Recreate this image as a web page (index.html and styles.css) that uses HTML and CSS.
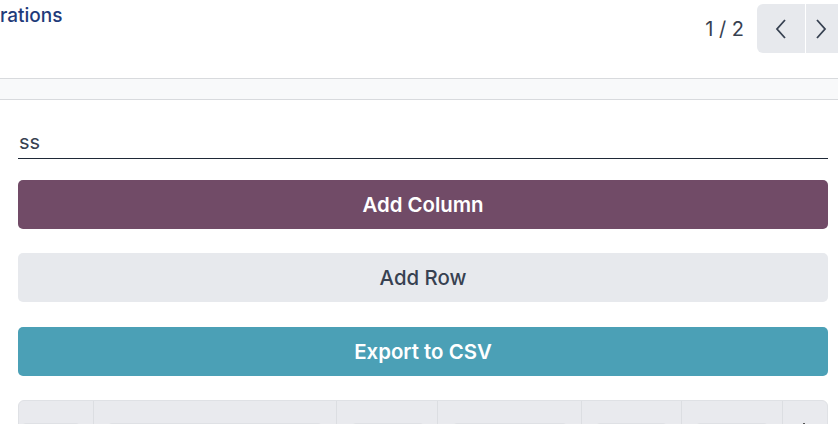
FILE: index.html
```html
<!DOCTYPE html>
<html>
<head>
<meta charset="utf-8">
<link rel="stylesheet" href="styles.css">
</head>
<body>
<div class="header">
  <div class="crumb">rations</div>
  <div class="pager">
    <span class="pager-value">1 / 2</span>
    <div class="pager-btns">
      <button class="pbtn pbtn-l"><svg width="16" height="24" viewBox="0 0 16 24"><path d="M12 3 L4 12 L12 21" fill="none" stroke="#374151" stroke-width="1.8"/></svg></button>
      <button class="pbtn pbtn-r"><svg width="16" height="24" viewBox="0 0 16 24"><path d="M4 3 L12 12 L4 21" fill="none" stroke="#374151" stroke-width="1.8"/></svg></button>
    </div>
  </div>
</div>
<div class="band"></div>
<div class="content">
  <div class="field">ss</div>
  <button class="btn btn-primary">Add Column</button>
  <button class="btn btn-light">Add Row</button>
  <button class="btn btn-info">Export to CSV</button>
  <div class="table">
    <div class="col c1"><div class="cell"></div></div>
    <div class="col c2"><div class="cell"></div></div>
    <div class="col c3"><div class="cell"></div></div>
    <div class="col c4"><div class="cell"></div></div>
    <div class="col c5"><div class="cell"></div></div>
    <div class="col c6"><div class="cell"></div></div>
    <div class="col c7"><span class="dot"></span></div>
  </div>
</div>
</body>
</html>
```
FILE: styles.css
```css
* { box-sizing: border-box; }
html, body { margin: 0; padding: 0; }
body {
  font-family: Inter, "Noto Sans", sans-serif;
  background: #fff;
  width: 838px;
  height: 424px;
  overflow: hidden;
  color: #374151;
}
.header {
  height: 79px;
  border-bottom: 1px solid #d8dadd;
  display: flex;
  justify-content: space-between;
  align-items: flex-start;
}
.crumb {
  margin-top: 4px;
  font-size: 19px;
  font-weight: 500;
  color: #1f3b7a;
  line-height: 24px;
}
.pager {
  display: flex;
  align-items: center;
  margin-top: 4px;
}
.pager-value {
  font-size: 20px;
  color: #374151;
  margin-right: 13px;
}
.pager-btns { display: flex; }
.pbtn {
  width: 48px;
  height: 49px;
  background: #e7e9ed;
  border: none;
  padding: 0;
  display: flex;
  align-items: center;
  justify-content: center;
}
.pbtn-l { border-radius: 6px 0 0 6px; margin-right: 1px; }
.pbtn-r { width: 32px; justify-content: flex-start; padding-left: 7px; }
.band {
  height: 21px;
  background: #f8f9fa;
  border-bottom: 1px solid #d8dadd;
}
.content {
  padding: 0 10px 0 18px;
  display: flex;
  flex-direction: column;
}
.field {
  margin-top: 29px;
  height: 30px;
  border-bottom: 1.5px solid #1f2937;
  font-size: 20px;
  line-height: 26px;
  color: #374151;
  padding-left: 1px;
}
.btn {
  height: 49px;
  border: none;
  border-radius: 5px;
  font-family: Inter, "Noto Sans", sans-serif;
  font-size: 20.4px;
  width: 100%;
}
.btn-primary {
  margin-top: 21px;
  background: #714b67;
  color: #fff;
  font-weight: 600;
}
.btn-light {
  margin-top: 24px;
  background: #e7e9ed;
  color: #374151;
  font-weight: 500;
}
.btn-info {
  margin-top: 25px;
  background: #4ba0b6;
  color: #fff;
  font-weight: 600;
}
.table {
  margin-top: 24px;
  height: 60px;
  background: #e9eaee;
  border: 1px solid #dfe1e5;
  border-radius: 6px 6px 0 0;
  display: flex;
}
.col {
  border-right: 1px solid #dcdee2;
  padding-top: 22px;
}
.col:last-child { border-right: none; }
.c1 { width: 75px; padding-left: 2px; }
.c2 { width: 243px; padding-left: 13px; }
.c3 { width: 101px; padding-left: 14px; }
.c4 { width: 144px; padding-left: 14px; }
.c5 { width: 100px; padding-left: 13px; }
.c6 { width: 101px; padding-left: 13px; }
.c7 { flex: 1; position: relative; }
.cell {
  height: 30px;
  border: 1px solid #dfe1e5;
  border-radius: 5px;
  background: #eceef1;
}
.c1 .cell { width: 60px; }
.c2 .cell { width: 216px; }
.c3 .cell { width: 74px; }
.c4 .cell { width: 116px; }
.c5 .cell { width: 73px; }
.c6 .cell { width: 74px; }
.dot {
  position: absolute;
  left: 20px;
  top: 22px;
  width: 2px;
  height: 4px;
  background: #555;
}
```
